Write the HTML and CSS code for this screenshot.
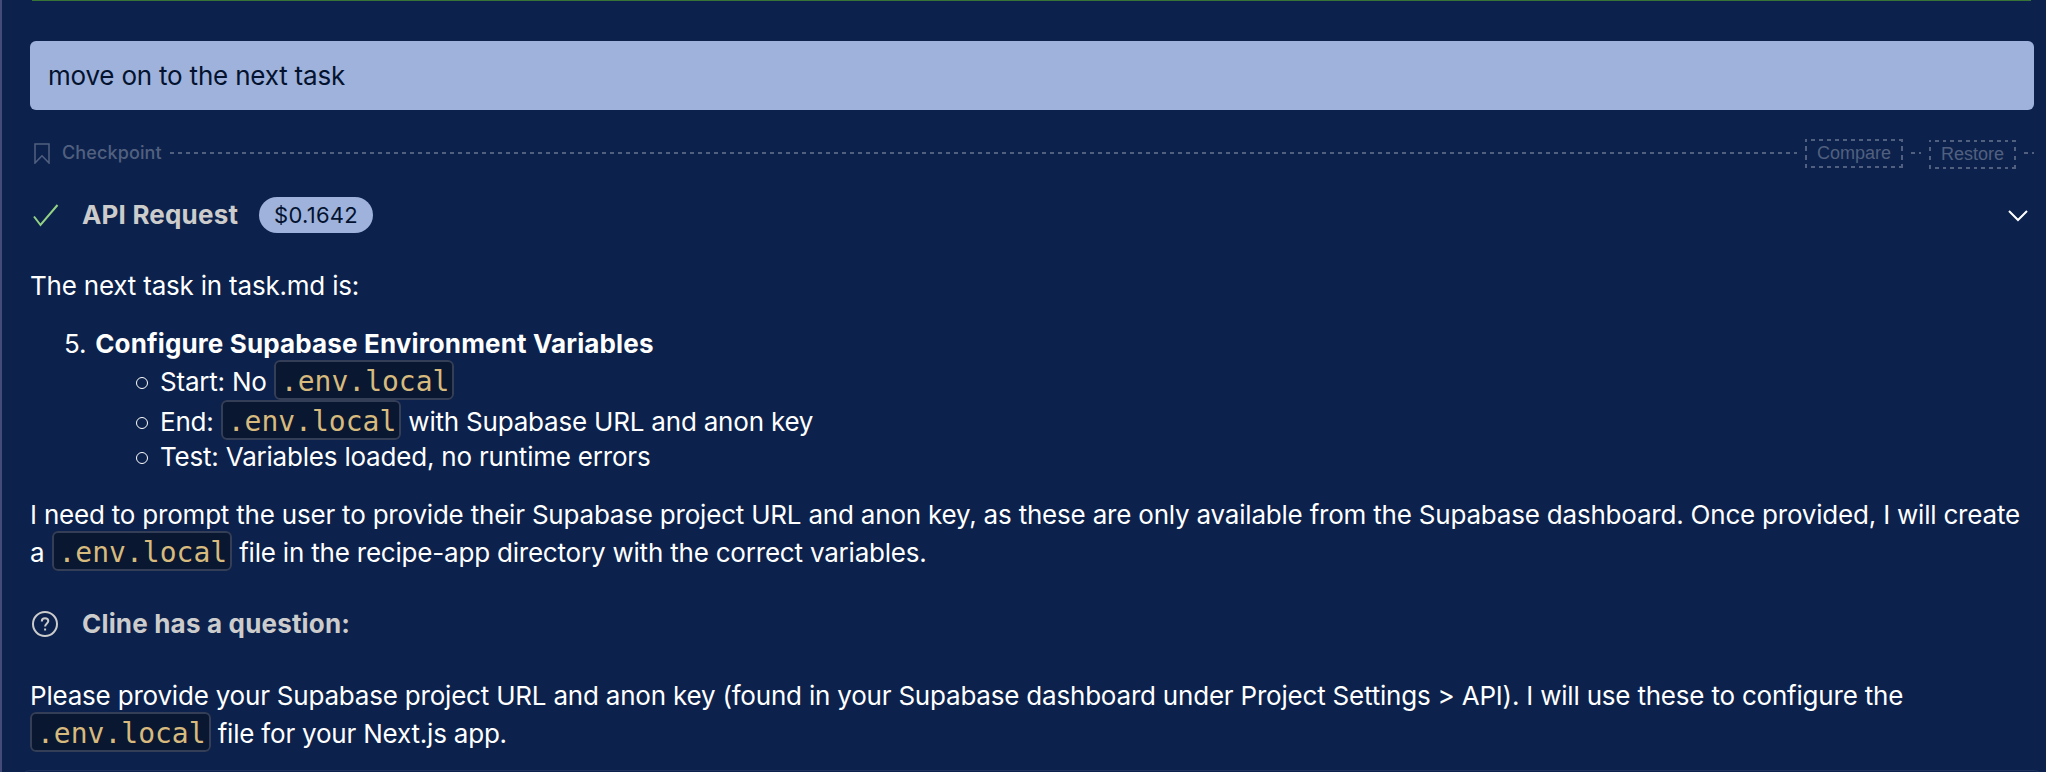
FILE: index.html
```html
<!DOCTYPE html>
<html lang="en">
<head>
<meta charset="utf-8">
<title>Cline</title>
<link rel="stylesheet" href="styles.css">
</head>
<body>
<main class="panel">
  <div class="result-edge"></div>
  <div class="user-message">move on to the next task</div>
  <div class="checkpoint">
    <svg class="bookmark" viewBox="0 0 16 21"><path d="M1 1H15V20L8 12.8L1 20Z"/></svg>
    <span class="checkpoint-label">Checkpoint</span>
    <span class="dash dash-fill"></span>
    <button class="action compare">Compare</button>
    <span class="dash dash-short"></span>
    <button class="action restore">Restore</button>
    <span class="dash dash-short"></span>
  </div>
  <div class="request">
    <svg class="check" viewBox="0 0 26 23"><path d="M1 12.5L7.5 21L24.5 1"/></svg>
    <span class="title">API Request</span>
    <span class="cost">$0.1642</span>
    <svg class="chevron" viewBox="0 0 20 12"><path d="M1 1L10 10L19 1"/></svg>
  </div>
  <section class="answer">
    <p>The next task in task.md is:</p>
    <div class="task"><span>5.</span><strong class="heading">Configure Supabase Environment Variables</strong></div>
    <ul class="steps">
      <li>Start: No <code>.env.local</code></li>
      <li class="step-end">End: <code>.env.local</code> with Supabase URL and anon key</li>
      <li class="step-test">Test: Variables loaded, no runtime errors</li>
    </ul>
    <p class="need">I need to prompt the user to provide their Supabase project URL and anon key, as these are only available from the Supabase dashboard. Once provided, I will create<br>a <code>.env.local</code> file in the recipe-app directory with the correct variables.</p>
  </section>
  <div class="question">
    <svg class="help" viewBox="0 0 26 26"><circle cx="13" cy="13" r="12"/><path d="M9.8 10.4C9.8 8.4 11.1 7.2 13 7.2S16.3 8.4 16.3 10.1C16.3 12.4 13.1 12.6 13.1 15.6M13.1 17.4V19.6"/></svg>
    <span class="title">Cline has a question:</span>
  </div>
  <p class="ask">Please provide your Supabase project URL and anon key (found in your Supabase dashboard under Project Settings &gt; API). I will use these to configure the<br><code>.env.local</code> file for your Next.js app.</p>
  <div class="options-edge"></div>
</main>
</body>
</html>
```
FILE: styles.css
```css
* { box-sizing: border-box; }
body { margin: 0; background: #0c224c; color: #fff; font: 400 26px/38px Inter, sans-serif; letter-spacing: -0.205px; }
p, ul { margin: 0; padding: 0; }
.panel { height: 772px; overflow: hidden; border-left: 2px solid #454b78; padding: 0 12px 0 28px; display: flex; flex-direction: column; white-space: nowrap; }
.result-edge { flex: none; height: 1px; margin: 0 3px 0 2px; background: #387338; }
.user-message { height: 69px; margin-top: 40px; border-radius: 6px; background: #9fb2db; color: #03132f; padding: 16px 18px; }
.checkpoint { height: 30px; margin-top: 28px; display: flex; align-items: center; color: #526080; font-size: 18px; letter-spacing: 0.12px; }
.bookmark { width: 16px; height: 21px; margin-left: 4px; fill: none; stroke: #526080; stroke-width: 1.5; }
.checkpoint-label { margin-left: 12px; font-weight: 500; }
.dash { height: 2px; background: repeating-linear-gradient(90deg, #526080 0 4px, transparent 4px 8px); }
.dash-fill { flex: 1; margin: 0 8px; }
.dash-short { width: 10px; margin: 0 8px; }
.dash-short:last-child { margin-right: 0; }
/* Even 4px dashes that meet at each corner */
.action {
  --h: repeating-linear-gradient(90deg, #526080 0 2px, transparent 2px 6px, #526080 6px var(--step));
  --v: repeating-linear-gradient(180deg, #526080 0 2.5px, transparent 2.5px 7px, #526080 7px 9px);
  --step: 8px;
  align-self: flex-start; height: 29px; border: 0; padding: 2px 0;
  background: var(--h) top / 100% 2px no-repeat, var(--h) bottom / 100% 2px no-repeat, var(--v) left / 2px 100% no-repeat, var(--v) right / 2px 100% no-repeat;
  color: #526080; font: 18px/25px "Liberation Sans", Arial, sans-serif;
}
.compare { width: 98px; margin-top: 1px; }
.restore { --step: 7.727px; width: 87px; margin-top: 2px; }
.request { height: 36px; margin-top: 29px; display: flex; align-items: center; }
.check { width: 26px; height: 23px; margin-left: 3px; fill: none; stroke: #93d184; stroke-width: 2; }
.title { color: #ccc; font-weight: 700; letter-spacing: 0.18px; }
.request .title { margin-left: 23px; }
.cost { width: 114px; height: 36px; margin-left: 21px; border-radius: 18px; background: #9fb2db; color: #03132f; font-size: 22px; line-height: 37px; padding-left: 15px; letter-spacing: 0.25px; }
.chevron { width: 20px; height: 12px; margin-left: auto; margin-right: 6px; margin-top: 2px; fill: none; stroke: #fff; stroke-width: 2; }
.answer { margin-top: 34px; }
.task { display: flex; margin-top: 20px; padding-left: 34px; }
.heading { margin-left: 9px; letter-spacing: 0.14px; }
.steps { list-style: none; }
.steps li { padding-left: 130px; position: relative; }
.steps li::before { content: ""; position: absolute; left: 106px; top: 14px; width: 10px; height: 10px; border: 1.5px solid #fff; border-radius: 50%; }
.steps .step-end { height: 38px; margin-top: 2px; }
.steps .step-test { margin-top: -3px; }
.need { margin-top: 20px; }
code { font: 28px/1 "DejaVu Sans Mono", monospace; color: #d7ba7d; background: #0a1730; border: 2px solid #343e57; border-radius: 6px; padding: 3px 3px 0 5px; letter-spacing: 0; }
.question { display: flex; align-items: center; height: 38px; margin-top: 33px; }
.help { width: 26px; height: 26px; margin-left: 2px; fill: none; stroke: #ccc; stroke-width: 2; }
.question .title { margin-left: 24px; }
.ask { margin-top: 34px; }
.options-edge { flex: none; height: 20px; margin: 17px -10px 0; border: 1px solid #1f315d; border-radius: 10px; }
```
